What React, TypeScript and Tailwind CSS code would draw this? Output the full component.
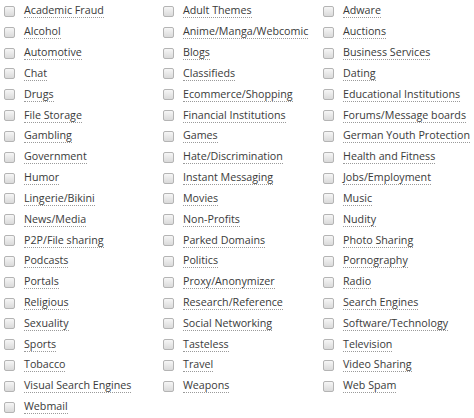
const categories = [
  "Academic Fraud", "Adult Themes", "Adware",
  "Alcohol", "Anime/Manga/Webcomic", "Auctions",
  "Automotive", "Blogs", "Business Services",
  "Chat", "Classifieds", "Dating",
  "Drugs", "Ecommerce/Shopping", "Educational Institutions",
  "File Storage", "Financial Institutions", "Forums/Message boards",
  "Gambling", "Games", "German Youth Protection",
  "Government", "Hate/Discrimination", "Health and Fitness",
  "Humor", "Instant Messaging", "Jobs/Employment",
  "Lingerie/Bikini", "Movies", "Music",
  "News/Media", "Non-Profits", "Nudity",
  "P2P/File sharing", "Parked Domains", "Photo Sharing",
  "Podcasts", "Politics", "Pornography",
  "Portals", "Proxy/Anonymizer", "Radio",
  "Religious", "Research/Reference", "Search Engines",
  "Sexuality", "Social Networking", "Software/Technology",
  "Sports", "Tasteless", "Television",
  "Tobacco", "Travel", "Video Sharing",
  "Visual Search Engines", "Weapons", "Web Spam",
  "Webmail",
];

function CategoryCheckbox({ label }: { label: string }) {
  return (
    <label className="flex h-[20.84px] items-center">
      <span className="ml-[4px] h-[11px] w-[11px] shrink-0 rounded-[2px] border border-[#b4b4b4] bg-gradient-to-b from-[#f6f6f6] to-[#dadada]" />
      <span className="ml-[9px] whitespace-nowrap border-b border-dotted border-[#9a9a9a] leading-[13px] text-[#3a3a3a]">
        {label}
      </span>
    </label>
  );
}

export default function App() {
  return (
    <div
      className="grid w-[474px] grid-cols-[159px_160px_155px] bg-white pt-[1px] text-[10.7px]"
      style={{ fontFamily: '"Open Sans", "Liberation Sans", sans-serif' }}
    >
      {categories.map((c) => (
        <CategoryCheckbox key={c} label={c} />
      ))}
    </div>
  );
}
